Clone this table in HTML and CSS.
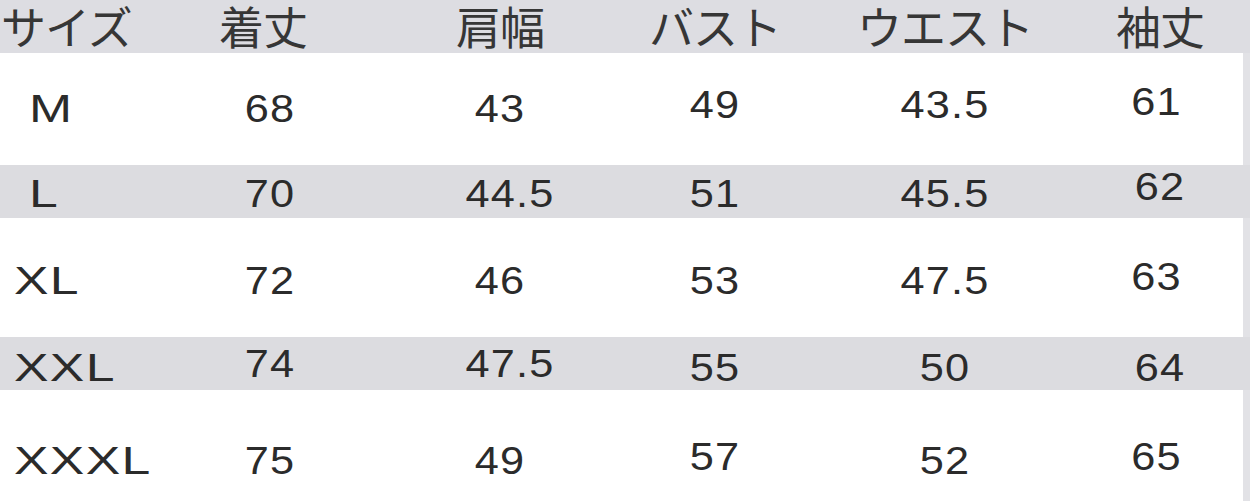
FILE: index.html
```html
<!DOCTYPE html>
<html lang="ja">
<head>
<meta charset="utf-8">
<title>サイズ表</title>
<link rel="stylesheet" href="styles.css">
</head>
<body>
<div class="chart">
  <div class="row head">
    <div class="cell first">サイズ</div>
    <div class="cell shift-l">着丈</div>
    <div class="cell">肩幅</div>
    <div class="cell">バスト</div>
    <div class="cell">ウエスト</div>
    <div class="cell">袖丈</div>
  </div>
  <div class="row white r-m">
    <div class="cell first indent"><span class="size">M</span></div>
    <div class="cell num">68</div>
    <div class="cell num">43</div>
    <div class="cell num up">49</div>
    <div class="cell num up">43.5</div>
    <div class="cell num up2">61</div>
  </div>
  <div class="row gray r-l">
    <div class="cell first indent"><span class="size">L</span></div>
    <div class="cell num">70</div>
    <div class="cell num right">44.5</div>
    <div class="cell num">51</div>
    <div class="cell num">45.5</div>
    <div class="cell num up2">62</div>
  </div>
  <div class="row white r-xl">
    <div class="cell first"><span class="size">XL</span></div>
    <div class="cell num">72</div>
    <div class="cell num">46</div>
    <div class="cell num">53</div>
    <div class="cell num">47.5</div>
    <div class="cell num up">63</div>
  </div>
  <div class="row gray r-xxl">
    <div class="cell first"><span class="size">XXL</span></div>
    <div class="cell num up">74</div>
    <div class="cell num up right">47.5</div>
    <div class="cell num">55</div>
    <div class="cell num">50</div>
    <div class="cell num">64</div>
  </div>
  <div class="row white r-xxxl">
    <div class="cell first"><span class="size">XXXL</span></div>
    <div class="cell num">75</div>
    <div class="cell num">49</div>
    <div class="cell num up">57</div>
    <div class="cell num">52</div>
    <div class="cell num up">65</div>
  </div>
</div>
</body>
</html>
```

FILE: styles.css
```css
html, body {
  margin: 0;
  padding: 0;
  background: #e2e2e6;
}

.chart {
  width: 1250px;
  height: 501px;
  overflow: hidden;
  display: flex;
  flex-direction: column;
  font-family: "Liberation Sans", Arial, sans-serif;
  color: #2b2b2b;
}

.row {
  display: grid;
  grid-template-columns: 150px 240px 220px 210px 250px 1fr;
  align-items: center;
  box-sizing: border-box;
}

.row.white {
  background: #ffffff;
  margin-right: 7px;
}

.row.gray {
  background: #dcdce0;
}

.head {
  height: 53px;
  background: #dddde2;
  font-family: "Noto Sans CJK JP", "Noto Sans", sans-serif;
  color: #363636;
  align-items: start;
}

.head .cell {
  font-size: 45px;
  line-height: 50px;
  letter-spacing: -1px;
  padding-top: 1px;
}

.head .cell.first {
  padding-left: 1px;
  text-align: left;
}

.head .shift-l {
  position: relative;
  left: -7px;
}

.r-m { height: 112px; }
.r-l { height: 53px; padding-top: 5px; }
.r-xl { height: 119px; padding-top: 6px; }
.r-xxl { height: 53px; padding-top: 9px; }
.r-xxxl { height: 111px; padding-top: 30px; }

.cell {
  text-align: center;
  font-size: 38px;
  line-height: 40px;
  white-space: nowrap;
}

.cell.num {
  letter-spacing: 1px;
  transform: scaleX(1.14);
}

.cell.up { position: relative; top: -4px; }
.cell.up2 { position: relative; top: -7px; }
.cell.right { position: relative; left: 10px; }

.cell.first {
  text-align: left;
  padding-left: 14px;
}

.cell.first.indent {
  padding-left: 29px;
}

.size {
  display: inline-block;
  font-size: 38px;
  letter-spacing: 1px;
  transform: scaleX(1.36);
  transform-origin: left center;
}
```
